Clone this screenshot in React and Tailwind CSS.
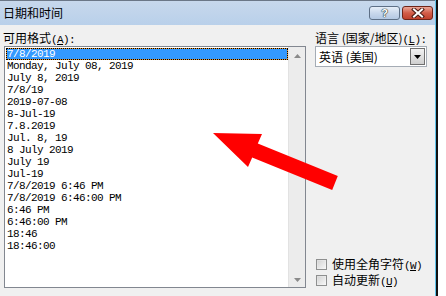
import React from "react";

const items = [
  "7/8/2019",
  "Monday, July 08, 2019",
  "July 8, 2019",
  "7/8/19",
  "2019-07-08",
  "8-Jul-19",
  "7.8.2019",
  "Jul. 8, 19",
  "8 July 2019",
  "July 19",
  "Jul-19",
  "7/8/2019 6:46 PM",
  "7/8/2019 6:46:00 PM",
  "6:46 PM",
  "6:46:00 PM",
  "18:46",
  "18:46:00",
];

const cjk = "font-['Noto_Sans_CJK_SC',sans-serif]";
const mono = "font-['Liberation_Mono','Noto_Sans_CJK_SC',monospace] text-[11px] tracking-[-0.6px]";

function Mn({ children }) {
  return <span className={mono}>{children}</span>;
}

function Checkbox({ label, acc }) {
  return (
    <div className="flex items-center h-[11px]">
      <div className="w-[11px] h-[11px] border border-[#8e8f8f] bg-gradient-to-br from-[#dcdcdc] to-[#f8f8f8] p-[1px]">
        <div className="w-full h-full bg-gradient-to-br from-[#d6d6d6] to-[#f4f4f4]" />
      </div>
      <div className={`${cjk} ml-[5px] text-[12px] leading-[12px] text-black whitespace-nowrap`}>
        {label}
        <Mn>
          (<span className="underline">{acc}</span>)
        </Mn>
      </div>
    </div>
  );
}

export default function App() {
  return (
    <div className="relative w-[446px] h-[296px] overflow-hidden bg-white flex">
      {/* dialog */}
      <div className="w-[435px] h-full flex flex-col bg-[#f0f0f0]">
        {/* title bar */}
        <div className="h-[25px] flex items-start justify-between border-t border-[#6b7787] bg-gradient-to-b from-[#c7d8ec] to-[#b9d0ea]">
          <div className={`${cjk} ml-[3px] mt-[4px] text-[12px] leading-[16px] text-black`}>
            日期和时间
          </div>
          <div className="flex mt-[5px] mr-[2px] gap-[2px]">
            <div className="w-[31px] h-[14px] rounded-[3px] border border-[#5d6f86] bg-gradient-to-b from-[#e6eef8] via-[#c9d8ec] to-[#b3c8e3] flex items-center justify-center">
              <span className="font-['Liberation_Sans',sans-serif] font-bold text-[11px] leading-[11px] text-white [text-shadow:0_0_1px_#233,0_0_1px_#233,0_0_1px_#233]">
                ?
              </span>
            </div>
            <div className="w-[31px] h-[14px] rounded-[3px] border border-[#6e2418] bg-gradient-to-b from-[#e9a597] via-[#d25c48] to-[#c0402c] flex items-center justify-center">
              <svg width="14" height="10" viewBox="0 0 14 10">
                <path d="M3 1.5 L11 8.5 M11 1.5 L3 8.5" stroke="#4a1a14" strokeWidth="4" strokeLinecap="square" />
                <path d="M3 1.5 L11 8.5 M11 1.5 L3 8.5" stroke="#ffffff" strokeWidth="2" strokeLinecap="square" />
              </svg>
            </div>
          </div>
        </div>

        {/* content */}
        <div className="flex-1 flex">
          {/* left column */}
          <div className="flex flex-col">
            <div className={`${cjk} ml-[3px] mt-[6px] h-[14px] text-[12px] leading-[14px] text-black whitespace-nowrap`}>
              可用格式<Mn>(<span className="underline">A</span>):</Mn>
            </div>
            <div className="ml-[4px] mt-[1px] w-[302px] h-[242px] border border-[#828790] flex">
              <div className="flex-1 bg-white pt-[1px] pl-[1px]">
                {items.map((t, i) =>
                  i === 0 ? (
                    <div key={i} className="h-[12px] bg-[#e7962e] border border-dotted border-black">
                      <div className={`${mono} h-full bg-[#3399ff] text-white leading-[10px] whitespace-pre`}>
                        {t}
                      </div>
                    </div>
                  ) : (
                    <div key={i} className={`${mono} h-[12px] leading-[12px] pl-[1px] text-black whitespace-pre`}>
                      {t}
                    </div>
                  )
                )}
              </div>
              <div className="w-[17px] bg-[#ececec] border-l border-[#e2e2e2] flex flex-col items-center justify-between pt-[7px] pb-[5px]">
                <svg width="7" height="4" viewBox="0 0 7 4">
                  <path d="M0 4 L3.5 0 L7 4 Z" fill="#8a8a8a" />
                </svg>
                <svg width="7" height="4" viewBox="0 0 7 4">
                  <path d="M0 0 L3.5 4 L7 0 Z" fill="#8a8a8a" />
                </svg>
              </div>
            </div>
          </div>

          {/* right column */}
          <div className="ml-[9px] w-[112px] flex flex-col">
            <div className={`${cjk} mt-[6px] h-[14px] text-[12px] leading-[14px] text-black whitespace-nowrap`}>
              语言 (国家/地区)<Mn>(<span className="underline">L</span>):</Mn>
            </div>
            <div className="mt-[1px] h-[21px] border border-[#a5acb5] bg-white flex items-center justify-between">
              <div className={`${cjk} ml-[3px] text-[12px] leading-[14px] text-black whitespace-nowrap`}>
                英语 (美国)
              </div>
              <div className="w-[15px] h-[17px] mr-[1px] border border-[#707070] bg-gradient-to-b from-[#f2f2f2] to-[#cfcfcf] flex items-center justify-center">
                <svg width="7" height="4" viewBox="0 0 7 4">
                  <path d="M0 0 L7 0 L3.5 4 Z" fill="#000" />
                </svg>
              </div>
            </div>
            <div className="mt-[192px] ml-[1px] flex flex-col gap-[5px]">
              <Checkbox label="使用全角字符" acc="W" />
              <Checkbox label="自动更新" acc="U" />
            </div>
          </div>
        </div>
      </div>

      {/* window frame right edge */}
      <div className="w-[1px] h-full bg-[#5fc3ea]" />
      <div className="w-[2px] h-full bg-[#111]" />
      <div className="flex-1 h-full bg-white" />

      {/* red arrow annotation */}
      <svg className="absolute left-0 top-0 pointer-events-none" width="446" height="296" viewBox="0 0 446 296">
        <polygon
          points="213,133 262,134 257.8,143.5 337.8,176 332.2,190 252.2,157.5 248,167"
          fill="#ff0000"
        />
      </svg>
    </div>
  );
}
